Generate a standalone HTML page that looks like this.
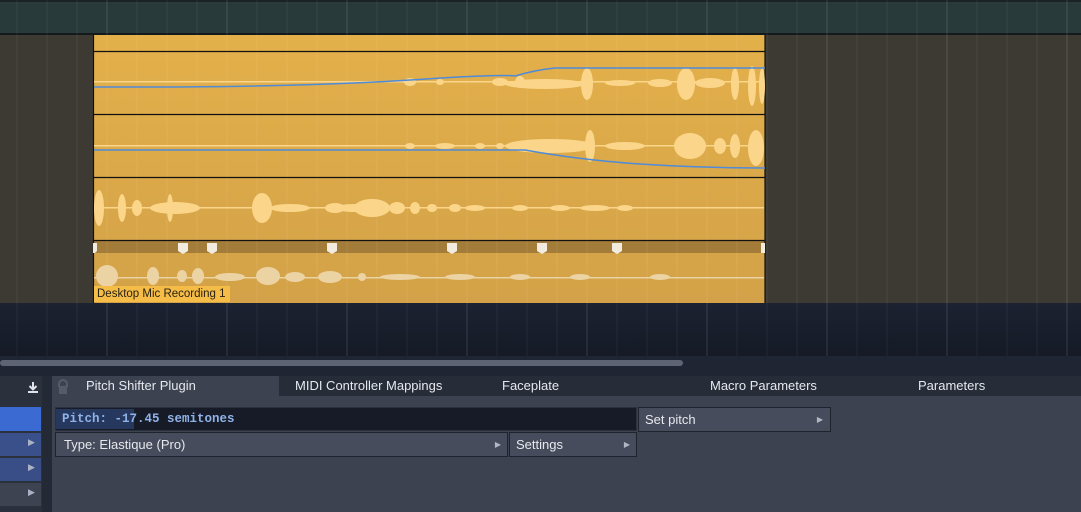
<!DOCTYPE html>
<html><head><style>
*{margin:0;padding:0;box-sizing:border-box}
body{width:1081px;height:512px;overflow:hidden;background:#1d2330;font-family:"Liberation Sans",sans-serif;position:relative}
.a{position:absolute}
.tab{position:absolute;top:376px;height:20px;font-size:13px;color:#e6e8ee;line-height:20px}
</style></head><body>
<div class="a" style="left:0;top:0;width:1081px;height:35px;background:#283a3a;border-top:2px solid #1a2224;border-bottom:2px solid #141a1c"></div>
<div class="a" style="left:0;top:35px;width:1081px;height:268px;background:#3d3a33"></div>
<div class="a" style="left:0;top:303px;width:1081px;height:53px;background:linear-gradient(#1c2231,#151a26)"></div>
<svg class="a" style="left:0;top:0" width="1081" height="356">
<g stroke="#ffffff" stroke-opacity="0.06" stroke-width="1">
<path d="M17 0V356M47 0V356M77 0V356M137 0V356M167 0V356M197 0V356M257 0V356M287 0V356M317 0V356M377 0V356M407 0V356M437 0V356M497 0V356M527 0V356M557 0V356M617 0V356M647 0V356M677 0V356M737 0V356M767 0V356M797 0V356M857 0V356M887 0V356M917 0V356M977 0V356M1007 0V356M1037 0V356"/>
</g>
<g stroke="#ffffff" stroke-opacity="0.14"><path d="M107 0V356M227 0V356M347 0V356M467 0V356M587 0V356M707 0V356M827 0V356M947 0V356M1067 0V356"/></g>
<defs><linearGradient id="g" x1="0" y1="0" x2="0" y2="1"><stop offset="0" stop-color="#e3b04a"/><stop offset="1" stop-color="#d3a248"/></linearGradient></defs>
<rect x="93" y="35" width="672" height="268" fill="url(#g)"/>
<rect x="93" y="241" width="672" height="12" fill="#a27c38"/>
<g stroke="#ffffff" stroke-opacity="0.08"><path d="M107 36V302M227 36V302M347 36V302M467 36V302M587 36V302M707 36V302M137 36V302M167 36V302M197 36V302M257 36V302M287 36V302M317 36V302M377 36V302M407 36V302M437 36V302M497 36V302M527 36V302M557 36V302M617 36V302M647 36V302M677 36V302M737 36V302"/></g>
<g stroke="#111" stroke-width="1.2"><path d="M93 51.5H765M93 114.5H765M93 177.5H765M93 240.5H765"/><path d="M93.5 35V303M765 35V303"/></g>
<g fill="#fbd68a">
<rect x="94" y="81" width="670" height="1.5"/>
<ellipse cx="410" cy="82" rx="6" ry="4"/><ellipse cx="440" cy="82" rx="4" ry="3"/><ellipse cx="500" cy="82" rx="8" ry="4"/><ellipse cx="520" cy="82" rx="5" ry="6"/>
<ellipse cx="545" cy="84" rx="40" ry="5"/><ellipse cx="587" cy="84" rx="6" ry="16"/><ellipse cx="620" cy="83" rx="15" ry="3"/><ellipse cx="660" cy="83" rx="12" ry="4"/>
<ellipse cx="686" cy="84" rx="9" ry="16"/><ellipse cx="710" cy="83" rx="15" ry="5"/><ellipse cx="735" cy="84" rx="4" ry="16"/><ellipse cx="752" cy="86" rx="4" ry="20"/><ellipse cx="762" cy="86" rx="3" ry="18"/>
<rect x="94" y="145" width="670" height="1.5"/>
<ellipse cx="410" cy="146" rx="5" ry="3"/><ellipse cx="445" cy="146" rx="10" ry="3"/><ellipse cx="480" cy="146" rx="5" ry="3"/><ellipse cx="500" cy="146" rx="4" ry="3"/>
<ellipse cx="550" cy="146" rx="45" ry="7"/><ellipse cx="590" cy="146" rx="5" ry="16"/><ellipse cx="625" cy="146" rx="20" ry="4"/><ellipse cx="690" cy="146" rx="16" ry="13"/><ellipse cx="720" cy="146" rx="6" ry="8"/><ellipse cx="735" cy="146" rx="5" ry="12"/><ellipse cx="756" cy="148" rx="8" ry="18"/>
<rect x="94" y="207" width="670" height="1.5"/>
<ellipse cx="99" cy="208" rx="5" ry="18"/><ellipse cx="122" cy="208" rx="4" ry="14"/><ellipse cx="137" cy="208" rx="5" ry="8"/><ellipse cx="175" cy="208" rx="25" ry="6"/><ellipse cx="170" cy="208" rx="3" ry="14"/><ellipse cx="262" cy="208" rx="10" ry="15"/><ellipse cx="290" cy="208" rx="20" ry="4"/><ellipse cx="355" cy="208" rx="20" ry="4"/>
<ellipse cx="335" cy="208" rx="10" ry="5"/><ellipse cx="372" cy="208" rx="18" ry="9"/><ellipse cx="397" cy="208" rx="8" ry="6"/><ellipse cx="415" cy="208" rx="5" ry="6"/><ellipse cx="432" cy="208" rx="5" ry="4"/><ellipse cx="455" cy="208" rx="6" ry="4"/><ellipse cx="475" cy="208" rx="10" ry="3"/><ellipse cx="520" cy="208" rx="8" ry="3"/><ellipse cx="560" cy="208" rx="10" ry="3"/><ellipse cx="595" cy="208" rx="15" ry="3"/><ellipse cx="625" cy="208" rx="8" ry="3"/>
</g>
<g fill="#ecd3a4">
<rect x="94" y="277" width="670" height="1.5"/>
<ellipse cx="107" cy="276" rx="11" ry="11"/><ellipse cx="153" cy="276" rx="6" ry="9"/><ellipse cx="182" cy="276" rx="5" ry="6"/><ellipse cx="198" cy="276" rx="6" ry="8"/><ellipse cx="230" cy="277" rx="15" ry="4"/><ellipse cx="268" cy="276" rx="12" ry="9"/><ellipse cx="295" cy="277" rx="10" ry="5"/><ellipse cx="330" cy="277" rx="12" ry="6"/><ellipse cx="362" cy="277" rx="4" ry="4"/>
<ellipse cx="400" cy="277" rx="20" ry="3"/><ellipse cx="460" cy="277" rx="15" ry="3"/><ellipse cx="520" cy="277" rx="10" ry="3"/><ellipse cx="580" cy="277" rx="10" ry="3"/><ellipse cx="660" cy="277" rx="10" ry="3"/>
</g>
<g fill="none" stroke="#4f8bd8" stroke-width="1.5">
<path d="M94 87H180Q320 86 410 80T515 76Q535 70 555 68H765"/>
<path d="M94 150H525Q580 160 640 164T765 168"/>
</g>
<g fill="#f2ece0">
<path d="M93 243h4v8l-2 2h-2z"/><path d="M178 243h10v8l-5 3l-5-3z"/><path d="M207 243h10v8l-5 3l-5-3z"/><path d="M327 243h10v8l-5 3l-5-3z"/><path d="M447 243h10v8l-5 3l-5-3z"/><path d="M537 243h10v8l-5 3l-5-3z"/><path d="M612 243h10v8l-5 3l-5-3z"/><path d="M761 243h4v10h-4z"/>
</g>
</svg>
<div class="a" style="left:94px;top:286px;width:136px;height:16px;background:#f5bd48;font-size:11.5px;color:#2a2210;line-height:16px;padding-left:3px;white-space:nowrap">Desktop Mic Recording 1</div>
<div class="a" style="left:0;top:356px;width:1081px;height:20px;background:#1f2532"></div>
<div class="a" style="left:0;top:360px;width:683px;height:6px;border-radius:3px;background:#5d6473"></div>
<div class="a" style="left:0;top:376px;width:1081px;height:136px;background:#3c4250"></div>
<div class="a" style="left:0;top:376px;width:42px;height:136px;background:#2a303c"></div>
<svg class="a" style="left:27px;top:381px" width="12" height="12"><path d="M6 1V8M2.5 5L6 8.5L9.5 5" stroke="#e0e4ea" stroke-width="2" fill="none"/><rect x="1" y="10" width="10" height="2" fill="#e0e4ea"/></svg>
<div class="a" style="left:0;top:407px;width:41px;height:24px;background:#3a6ad2"></div>
<div class="a" style="left:0;top:433px;width:41px;height:23px;background:#39508a"></div>
<div class="a" style="left:0;top:458px;width:41px;height:23px;background:#394e86"></div>
<div class="a" style="left:0;top:483px;width:41px;height:23px;background:#3e4352"></div>
<div class="a" style="left:28px;top:437px;color:#aab2c4;font-size:9px">&#9654;</div>
<div class="a" style="left:28px;top:462px;color:#aab2c4;font-size:9px">&#9654;</div>
<div class="a" style="left:28px;top:487px;color:#aab2c4;font-size:9px">&#9654;</div>
<div class="a" style="left:42px;top:376px;width:10px;height:136px;background:#232935"></div>
<div class="a" style="left:52px;top:376px;width:1029px;height:20px;background:#262c38"></div>
<div class="a" style="left:52px;top:376px;width:227px;height:20px;background:#3c4250"></div>
<div class="a" style="left:58px;top:379px;width:10px;height:8px;border:2px solid #555c68;border-radius:5px 5px 0 0;border-bottom:none"></div>
<div class="a" style="left:59px;top:386px;width:8px;height:8px;background:#555c68"></div>
<div class="tab" style="left:86px">Pitch Shifter Plugin</div>
<div class="tab" style="left:295px">MIDI Controller Mappings</div>
<div class="tab" style="left:502px">Faceplate</div>
<div class="tab" style="left:710px">Macro Parameters</div>
<div class="tab" style="left:918px">Parameters</div>
<div class="a" style="left:55px;top:407px;width:582px;height:24px;background:#161b27;border:1px solid #2a303c"></div>
<div class="a" style="left:56px;top:409px;width:78px;height:20px;background:#26385e"></div>
<div class="a" style="left:62px;top:412px;font-family:'Liberation Mono',monospace;font-size:12.5px;font-weight:bold;color:#8fb2e8">Pitch: -17.45 semitones</div>
<div class="a" style="left:638px;top:407px;width:193px;height:25px;background:#464c5b;border:1px solid #1e232d;color:#e6e8ee;font-size:13px;line-height:23px;padding-left:6px">Set pitch<span style="position:absolute;right:7px;font-size:8px;color:#b0b6c2">&#9654;</span></div>
<div class="a" style="left:55px;top:432px;width:453px;height:25px;background:#464c5b;border:1px solid #1e232d;color:#e6e8ee;font-size:13px;line-height:23px;padding-left:8px">Type: Elastique (Pro)<span style="position:absolute;right:6px;font-size:8px;color:#b0b6c2">&#9654;</span></div>
<div class="a" style="left:509px;top:432px;width:128px;height:25px;background:#464c5b;border:1px solid #1e232d;color:#e6e8ee;font-size:13px;line-height:23px;padding-left:6px">Settings<span style="position:absolute;right:6px;font-size:8px;color:#b0b6c2">&#9654;</span></div>
</body></html>
